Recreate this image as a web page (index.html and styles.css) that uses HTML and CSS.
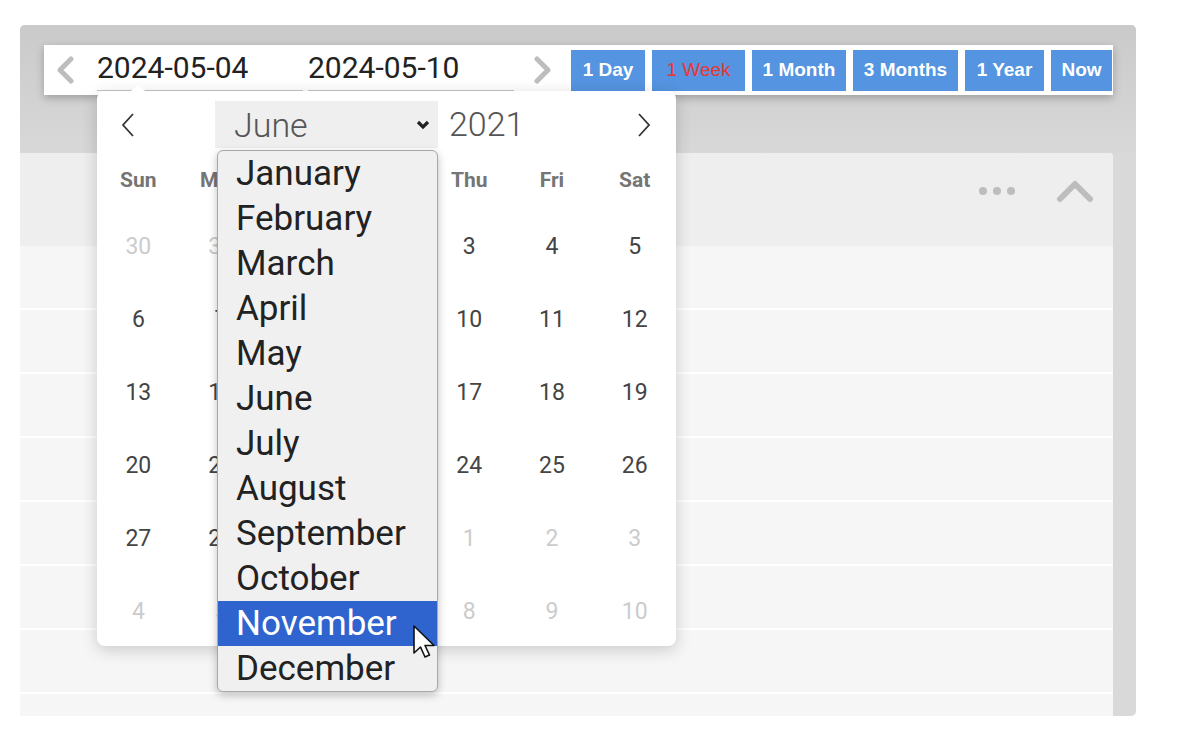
FILE: index.html
```html
<!DOCTYPE html>
<html lang="en">
<head>
  <meta charset="UTF-8">
  <title>Range picker</title>
  <link rel="stylesheet" href="styles.css">
</head>
<body>

<div class="frame">
  <div class="frame-top">
    <!-- Range toolbar -->
    <div class="toolbar">
      <span class="nav-arrow">
        <svg width="24" height="28" viewBox="0 0 24 28"><path d="M17 3 L6 14 L17 25" fill="none" stroke="#bdbdbd" stroke-width="5" stroke-linecap="round" stroke-linejoin="round"/></svg>
      </span>
      <div class="date-input">2024-05-04</div>
      <div class="date-input">2024-05-10</div>
      <span class="nav-arrow">
        <svg width="24" height="28" viewBox="0 0 24 28"><path d="M7 3 L18 14 L7 25" fill="none" stroke="#bdbdbd" stroke-width="5" stroke-linecap="round" stroke-linejoin="round"/></svg>
      </span>
      <div class="range-buttons">
        <button>1 Day</button>
        <button class="active">1 Week</button>
        <button>1 Month</button>
        <button>3 Months</button>
        <button>1 Year</button>
        <button>Now</button>
      </div>
    </div>
  </div>

  <div class="panel">
    <div class="panel-head">
      <svg width="38" height="10" viewBox="0 0 38 10"><circle cx="5" cy="5" r="4" fill="#bdbdbd"/><circle cx="19" cy="5" r="4" fill="#bdbdbd"/><circle cx="33" cy="5" r="4" fill="#bdbdbd"/></svg>
      <svg width="38" height="26" viewBox="0 0 38 26"><path d="M4 21 L19 6 L34 21" fill="none" stroke="#bdbdbd" stroke-width="6" stroke-linecap="round" stroke-linejoin="round"/></svg>
    </div>
    <div class="row"></div>
    <div class="row"></div>
    <div class="row"></div>
    <div class="row"></div>
    <div class="row"></div>
    <div class="row"></div>
    <div class="row"></div>
  </div>

  <!-- Calendar popup -->
  <div class="calendar">
    <div class="notch"></div>
    <div class="cal-head">
      <span class="cal-arrow">
        <svg width="16" height="28" viewBox="0 0 16 28"><path d="M13 3 L3 14 L13 25" fill="none" stroke="#333" stroke-width="1.8"/></svg>
      </span>
      <div class="month-select">
        <span>June</span>
        <svg width="14" height="10" viewBox="0 0 14 10"><path d="M2 2 L7 7 L12 2" fill="none" stroke="#222" stroke-width="3.2"/></svg>
      </div>
      <span class="year">2021</span>
      <span class="cal-arrow next">
        <svg width="16" height="28" viewBox="0 0 16 28"><path d="M3 3 L13 14 L3 25" fill="none" stroke="#333" stroke-width="1.8"/></svg>
      </span>
    </div>
    <div class="weekdays">
      <span>Sun</span><span>Mon</span><span>Tue</span><span>Wed</span><span>Thu</span><span>Fri</span><span>Sat</span>
    </div>
    <div class="days" id="days"></div>

    <ul class="month-list">
      <li>January</li>
      <li>February</li>
      <li>March</li>
      <li>April</li>
      <li>May</li>
      <li>June</li>
      <li>July</li>
      <li>August</li>
      <li>September</li>
      <li>October</li>
      <li class="hover">November</li>
      <li>December</li>
    </ul>

    <svg class="cursor" width="26" height="38" viewBox="0 0 26 38"><path d="M2 2 L2 29 L8.5 23 L13 33 L17.5 31 L13 21.5 L22 21.5 Z" fill="#fff" stroke="#111" stroke-width="1.6" stroke-linejoin="round"/></svg>
  </div>
</div>

<script>
  // June 2021 starts on a Tuesday
  const days = document.getElementById("days");
  const cells = [];
  cells.push({ n: 30, muted: true }, { n: 31, muted: true });
  for (let d = 1; d <= 30; d++) cells.push({ n: d });
  let next = 1;
  while (cells.length < 42) cells.push({ n: next++, muted: true });
  cells.forEach(c => {
    const span = document.createElement("span");
    span.textContent = c.n;
    if (c.muted) span.className = "muted";
    days.appendChild(span);
  });
</script>

</body>
</html>
```

FILE: styles.css
```css
body {
  margin: 0;
  background: #fff;
  font-family: Roboto, "Liberation Sans", sans-serif;
}

.frame {
  position: relative;
  margin: 25px 0 0 20px;
  width: 1116px;
  height: 691px;
  background: #d9d9d9;
  border-radius: 5px;
  display: flex;
  flex-direction: column;
}

.frame-top {
  height: 128px;
  padding: 20px 23px 0 24px;
  box-sizing: border-box;
  background: linear-gradient(#cacaca, #d8d8d8);
  border-radius: 5px 5px 0 0;
}

/* Toolbar */
.toolbar {
  height: 50px;
  background: #fff;
  display: flex;
  align-items: center;
  box-shadow: 0 3px 8px rgba(0,0,0,0.25);
}

.nav-arrow {
  display: flex;
  width: 24px;
  margin-left: 10px;
}

.nav-arrow + .date-input {
  margin-left: 19px;
}

.date-input {
  width: 206px;
  height: 40px;
  margin-top: 1px;
  margin-right: 5px;
  border-bottom: 1px solid #c4c4c4;
  box-sizing: border-box;
  font-size: 30px;
  line-height: 34px;
  color: #222;
}

.date-input + .nav-arrow {
  margin-left: 11px;
}

.range-buttons {
  display: flex;
  gap: 7px;
  margin-left: 17px;
}

.range-buttons button {
  height: 41px;
  padding: 0;
  border: none;
  background: #5594e0;
  color: #fff;
  font-family: "Liberation Sans", Arial, sans-serif;
  font-weight: bold;
  font-size: 19px;
}

.range-buttons button:nth-child(1) { width: 74px; }
.range-buttons button:nth-child(2) { width: 93px; }
.range-buttons button:nth-child(3) { width: 94px; }
.range-buttons button:nth-child(4) { width: 105px; }
.range-buttons button:nth-child(5) { width: 79px; }
.range-buttons button:nth-child(6) { width: 61px; }

.range-buttons button.active {
  color: #e53935;
  font-weight: normal;
}

/* Panel */
.panel {
  flex: 1;
  margin-right: 23px;
  background: #f6f6f6;
  border-radius: 0 4px 0 0;
  overflow: hidden;
}

.panel-head {
  height: 93px;
  background: #eeeeee;
  display: flex;
  align-items: center;
  justify-content: flex-end;
  gap: 40px;
  padding: 0 19px 18px 0;
  box-sizing: border-box;
}

.row {
  height: 62px;
  border-bottom: 2px solid #fff;
}

.row:first-of-type {
  height: 59px;
}

/* Calendar popup */
.calendar {
  position: absolute;
  left: 77px;
  top: 66px;
  width: 579px;
  height: 555px;
  background: #fff;
  border-radius: 8px;
  box-shadow: 0 4px 16px rgba(0,0,0,0.18);
}

.notch {
  position: absolute;
  left: 34px;
  top: -6px;
  width: 0;
  height: 0;
  border-left: 7px solid transparent;
  border-right: 7px solid transparent;
  border-bottom: 6px solid #fff;
}

.cal-head {
  height: 69px;
  display: flex;
  align-items: flex-start;
  padding-top: 10px;
  box-sizing: border-box;
}

.cal-arrow {
  display: flex;
  width: 16px;
  margin: 10px 0 0 23px;
}

.cal-arrow.next {
  margin-left: auto;
  margin-right: 24px;
}

.month-select {
  width: 223px;
  height: 47px;
  margin-left: 79px;
  background: #efefef;
  display: flex;
  align-items: center;
  justify-content: space-between;
  padding: 0 8px 0 19px;
  box-sizing: border-box;
  font-size: 34px;
  font-weight: 300;
  color: #555;
}

.year {
  margin-left: 11px;
  font-size: 34px;
  font-weight: 300;
  line-height: 47px;
  color: #555;
}

.weekdays, .days {
  display: grid;
  grid-template-columns: repeat(7, 1fr);
  text-align: center;
}

.weekdays {
  height: 40px;
  line-height: 40px;
  margin-bottom: 10px;
  font-size: 21px;
  font-weight: bold;
  color: #757575;
}

.days span {
  height: 73px;
  line-height: 73px;
  font-size: 23px;
  color: #444;
}

.days span.muted {
  color: #cccccc;
}

/* Month dropdown */
.month-list {
  position: absolute;
  left: 120px;
  top: 59px;
  width: 221px;
  margin: 0;
  padding: 0;
  list-style: none;
  background: #f0f0f0;
  border: 1px solid #a8a8a8;
  border-radius: 6px;
  box-shadow: 0 3px 8px rgba(0,0,0,0.25);
  box-sizing: border-box;
}

.month-list li {
  height: 45px;
  line-height: 45px;
  padding-left: 18px;
  font-size: 35px;
  color: #222;
}

.month-list li.hover {
  background: #2f64cf;
  color: #fff;
}

.cursor {
  position: absolute;
  left: 315px;
  top: 533px;
}
```
